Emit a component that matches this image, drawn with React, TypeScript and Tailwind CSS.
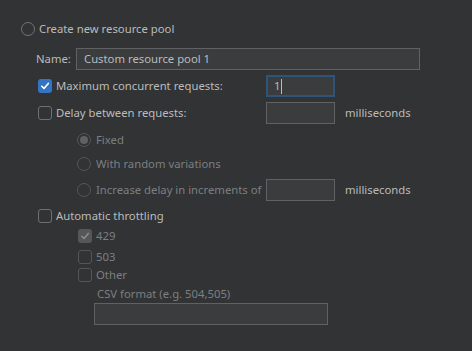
import type { ReactNode } from "react";

function Radio({ checked = false, disabled = false }: { checked?: boolean; disabled?: boolean }) {
  return (
    <span
      className={`flex h-[14px] w-[14px] shrink-0 items-center justify-center rounded-full border ${
        disabled ? "border-[#545657]" : "border-[#727476]"
      }`}
    >
      {checked && <span className="h-[8px] w-[8px] rounded-full bg-[#5f6163]" />}
    </span>
  );
}

function Checkbox({ checked = false, disabled = false }: { checked?: boolean; disabled?: boolean }) {
  if (checked && !disabled) {
    return (
      <span className="flex h-[14px] w-[14px] shrink-0 items-center justify-center rounded-[3px] bg-[#3574c4]">
        <svg width="10" height="10" viewBox="0 0 10 10" fill="none">
          <path d="M1.8 5.2 L4 7.4 L8.3 2.4" stroke="#ffffff" strokeWidth="1.6" strokeLinecap="round" strokeLinejoin="round" />
        </svg>
      </span>
    );
  }
  if (checked && disabled) {
    return (
      <span className="flex h-[14px] w-[14px] shrink-0 items-center justify-center rounded-[3px] bg-[#555759]">
        <svg width="10" height="10" viewBox="0 0 10 10" fill="none">
          <path d="M1.8 5.2 L4 7.4 L8.3 2.4" stroke="#8a8c8e" strokeWidth="1.5" strokeLinecap="round" strokeLinejoin="round" />
        </svg>
      </span>
    );
  }
  return (
    <span
      className={`h-[14px] w-[14px] shrink-0 rounded-[3px] border ${
        disabled ? "border-[#535557]" : "border-[#6e7072]"
      }`}
    />
  );
}

function Field({ focused = false, value = "", className = "" }: { focused?: boolean; value?: string; className?: string }) {
  return (
    <div
      className={`flex h-[22px] shrink-0 items-center bg-[#3a3c3e] ${
        focused ? "border-2 border-[#2f5479] pl-[6px]" : "border border-[#5f6163] pl-[7px]"
      } ${className}`}
    >
      {value && <span className="text-[#bbbbbb]">{value}</span>}
      {focused && <span className="ml-px h-[15px] w-px bg-[#bbbbbb]" />}
    </div>
  );
}

function Row({ className = "", children }: { className?: string; children: ReactNode }) {
  return <div className={`flex items-center whitespace-nowrap ${className}`}>{children}</div>;
}

export default function App() {
  return (
    <div
      className="h-[351px] w-[472px] overflow-hidden bg-[#313335] pt-[21px] text-[11.3px] leading-none text-[#bbbbbb]"
      style={{ fontFamily: '"Noto Sans", "Open Sans", sans-serif' }}
    >
      <Row className="h-[15px] pl-[21px]">
        <Radio />
        <span className="ml-[4px]">Create new resource pool</span>
      </Row>

      <Row className="mt-[12px] h-[22px] pl-[36px]">
        <span className="w-[40px]">Name:</span>
        <Field value="Custom resource pool 1" className="w-[344px]" />
      </Row>

      <Row className="mt-[5px] h-[22px] pl-[38px]">
        <Checkbox checked />
        <span className="ml-[4px] w-[210px]">Maximum concurrent requests:</span>
        <Field focused value="1" className="w-[69px]" />
      </Row>

      <Row className="mt-[5px] h-[22px] pl-[38px]">
        <Checkbox />
        <span className="ml-[4px] w-[210px]">Delay between requests:</span>
        <Field className="w-[69px]" />
        <span className="ml-[10px]">milliseconds</span>
      </Row>

      <div className="text-[#7d7f81]">
        <Row className="mt-[8px] h-[15px] pl-[77px]">
          <Radio checked disabled />
          <span className="ml-[5px]">Fixed</span>
        </Row>
        <Row className="mt-[10px] h-[14px] pl-[77px]">
          <Radio disabled />
          <span className="ml-[5px]">With random variations</span>
        </Row>
        <Row className="mt-[8px] h-[22px] pl-[77px]">
          <Radio disabled />
          <span className="ml-[5px] w-[170px]">Increase delay in increments of</span>
          <Field className="w-[69px]" />
          <span className="ml-[10px] text-[#bbbbbb]">milliseconds</span>
        </Row>
      </div>

      <Row className="mt-[7px] h-[15px] pl-[38px]">
        <Checkbox />
        <span className="ml-[4px]">Automatic throttling</span>
      </Row>

      <div className="text-[#7d7f81]">
        <Row className="mt-[6px] h-[14px] pl-[78px]">
          <Checkbox checked disabled />
          <span className="ml-[4px]">429</span>
        </Row>
        <Row className="mt-[7px] h-[14px] pl-[78px]">
          <Checkbox disabled />
          <span className="ml-[4px]">503</span>
        </Row>
        <Row className="mt-[4px] h-[14px] pl-[78px]">
          <Checkbox disabled />
          <span className="ml-[4px]">Other</span>
        </Row>
        <Row className="mt-[5px] h-[14px] pl-[97px]">
          <span>CSV format (e.g. 504,505)</span>
        </Row>
        <div className="mt-[2px] pl-[94px]">
          <Field className="w-[234px]" />
        </div>
      </div>
    </div>
  );
}
